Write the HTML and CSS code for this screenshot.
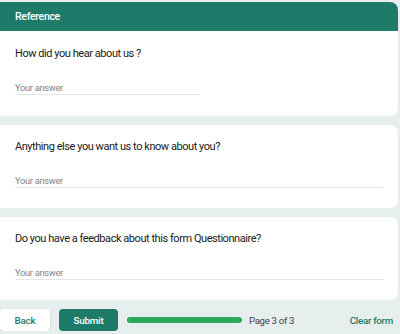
FILE: index.html
```html
<!DOCTYPE html>
<html lang="en">

<head>
    <meta charset="UTF-8" />
    <meta name="viewport" content="width=device-width, initial-scale=1.0" />
    <title>Reference</title>
    <link rel="stylesheet" href="styles.css">
</head>

<body>
    <div class="form">
        <div class="card">
            <div class="card-head">Reference</div>
            <div class="question">
                <p class="title">How did you hear about us ?</p>
                <input type="text" class="answer short" placeholder="Your answer" />
            </div>
        </div>

        <div class="card">
            <div class="question">
                <p class="title">Anything else you want us to know about you?</p>
                <input type="text" class="answer" placeholder="Your answer" />
            </div>
        </div>

        <div class="card">
            <div class="question">
                <p class="title">Do you have a feedback about this form Questionnaire?</p>
                <input type="text" class="answer" placeholder="Your answer" />
            </div>
        </div>

        <div class="footer">
            <button class="btn-back">Back</button>
            <button class="btn-submit">Submit</button>
            <div class="progress"><div class="progress-fill"></div></div>
            <span class="page-count">Page 3 of 3</span>
            <a href="#" class="clear">Clear form</a>
        </div>
    </div>
</body>

</html>
```

FILE: styles.css
```css
body {
    margin: 0;
    font-family: Roboto, "Liberation Sans", Arial, sans-serif;
    background-color: #e6efee;
    overflow: hidden;
}

.form {
    width: 406px;
    margin-left: -8px;
    padding-top: 2px;
    display: flex;
    flex-direction: column;
    gap: 9px;
}

.card {
    background-color: #fff;
    border-radius: 8px;
    overflow: hidden;
}

.card-head {
    background-color: #1e7b69;
    color: #fff;
    font-size: 10.5px;
    font-weight: 500;
    letter-spacing: -0.3px;
    height: 29px;
    line-height: 29px;
    padding-left: 23px;
}

.question {
    padding: 12px 15px 20px 23px;
}

.card-head + .question {
    padding-top: 13px;
    padding-bottom: 21px;
}

.title {
    margin: 0 0 16px;
    font-size: 11px;
    letter-spacing: -0.45px;
    line-height: 20px;
    color: #202124;
}

.answer {
    display: block;
    width: 100%;
    box-sizing: border-box;
    border: none;
    border-bottom: 1px solid #e3e6e6;
    padding: 0;
    height: 15px;
    line-height: 14px;
    font-family: inherit;
    font-size: 9.3px;
    letter-spacing: -0.3px;
    outline: none;
}

.answer::placeholder {
    color: #80868b;
}

.answer.short {
    width: 185px;
}

.footer {
    display: flex;
    align-items: center;
    padding: 0 5px 0 8px;
    height: 22px;
}

.footer button {
    height: 22px;
    border: none;
    border-radius: 4px;
    font-family: inherit;
    font-size: 9.8px;
    font-weight: 500;
    letter-spacing: -0.2px;
    padding: 0;
    cursor: pointer;
}

.btn-back {
    background-color: #fff;
    color: #1e7b69;
    width: 50px;
    box-shadow: 0 1px 2px rgba(0, 0, 0, 0.15);
}

.btn-submit {
    background-color: #1e7b69;
    color: #fff;
    width: 59px;
    margin-left: 9px;
}

.progress {
    width: 115px;
    height: 6px;
    margin-left: 9px;
    background-color: #dfe8e6;
    border-radius: 3px;
}

.progress-fill {
    width: 100%;
    height: 100%;
    background-color: #2fa75a;
    border-radius: 3px;
}

.page-count {
    margin-left: 7px;
    font-size: 9.6px;
    letter-spacing: -0.3px;
    color: #3c4043;
}

.clear {
    margin-left: auto;
    font-size: 9.8px;
    font-weight: 500;
    letter-spacing: -0.3px;
    color: #1e7b69;
    text-decoration: none;
}
```
